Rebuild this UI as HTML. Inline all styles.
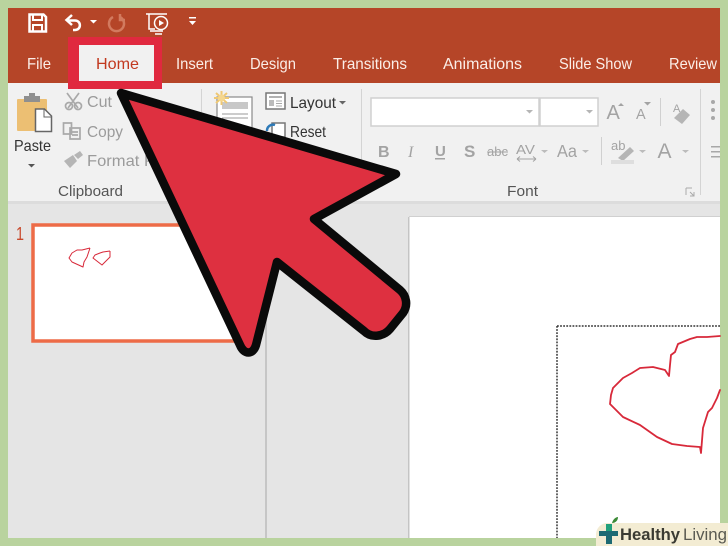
<!DOCTYPE html>
<html><head><meta charset="utf-8"><style>
html,body{margin:0;padding:0;width:728px;height:546px;overflow:hidden;background:#b9d39e}
svg{display:block}
text{font-family:"Liberation Sans",sans-serif}
</style></head><body>
<svg width="728" height="546" viewBox="0 0 728 546" xmlns="http://www.w3.org/2000/svg">
<rect width="728" height="546" fill="#b9d39e"/>
<!-- title bar -->
<rect x="8" y="8" width="712" height="75" fill="#b54528"/>
<!-- ribbon -->
<rect x="8" y="83" width="712" height="118" fill="#f1f1f1"/>
<rect x="8" y="201" width="712" height="337" fill="#e5e5e5"/>
<rect x="8" y="201" width="712" height="3" fill="#dcdcdc"/>
<!-- QAT -->
<g fill="none" stroke="#fff">
<path d="M29.500 14.500h14l2.500 2.500v14.500h-16.500z" stroke-width="2.500"/>
<path d="M33 15v5h9v-5M33 31v-6h9v6" stroke-width="2"/>
<path d="M72 15l-5.500 5 5.500 5M67 20.500h8c6.500 0 6.500 9.500 0 9.500h-2" stroke-width="2.500"/>
<path d="M113 17a7.500 7.500 0 1 0 7 0M120 14v6h5" stroke="#d27a5f" stroke-width="2.500"/>
<path d="M146 14h21M149 14v15h6M150 31h13M155 34h7" stroke-width="1.500"/>
<circle cx="161" cy="23" r="6.500" stroke-width="1.500"/>
</g>
<path d="M159 20v6l5-3zM90 20h7l-3.500 3.500zM189 21h7l-3.500 4zM189 17h7v1.500h-7z" fill="#fff"/>
<!-- Tabs -->
<rect x="68" y="37" width="94" height="52" fill="#e0293f"/>
<rect x="79" y="45" width="75" height="36" fill="#f1f1f1"/>
<g font-size="16" fill="#fbeee8">
<text x="27" y="69" textLength="24" lengthAdjust="spacingAndGlyphs">File</text>
<text x="176" y="69" textLength="37" lengthAdjust="spacingAndGlyphs">Insert</text>
<text x="250" y="69" textLength="46" lengthAdjust="spacingAndGlyphs">Design</text>
<text x="333" y="69" textLength="74" lengthAdjust="spacingAndGlyphs">Transitions</text>
<text x="443" y="69" textLength="79" lengthAdjust="spacingAndGlyphs">Animations</text>
<text x="559" y="69" textLength="73" lengthAdjust="spacingAndGlyphs">Slide Show</text>
<text x="669" y="69" textLength="48" lengthAdjust="spacingAndGlyphs">Review</text>
</g>
<text x="96" y="69" font-size="16" fill="#c2391f" textLength="43" lengthAdjust="spacingAndGlyphs">Home</text>
<!-- Clipboard -->
<rect x="17" y="99" width="30" height="32" rx="1" fill="#ecbf73"/>
<rect x="24" y="96" width="16" height="6" fill="#8f8f8f"/>
<rect x="29" y="93" width="6" height="5" fill="#8f8f8f"/>
<path d="M35.500 109h9l7 7v15.500h-16z" fill="#fff" stroke="#666" stroke-width="1.500"/>
<path d="M44 109v8h7.500" fill="none" stroke="#666"/>
<text x="14" y="151" font-size="16" fill="#333" textLength="37" lengthAdjust="spacingAndGlyphs">Paste</text>
<path d="M28 164h7l-3.500 3.500z" fill="#555"/>
<g fill="none" stroke="#a9a9a9" stroke-width="1.700">
<path d="M67 93l11 15M79 93l-11 15"/>
<circle cx="69" cy="106" r="3.500"/><circle cx="78" cy="106" r="3.500"/>
<path d="M63.500 123h8v11h-8zM70 128h10v11h-10zM72 132h6M72 135h6"/>
</g>
<path d="M64 161l9-6 4 6-7 7zM74 155l6-4 3 4-5 4z" fill="#b5b5b5"/>
<g font-size="16" fill="#9b9b9b">
<text x="87" y="107" textLength="25" lengthAdjust="spacingAndGlyphs">Cut</text>
<text x="87" y="137" textLength="36" lengthAdjust="spacingAndGlyphs">Copy</text>
<text x="87" y="166" textLength="68" lengthAdjust="spacingAndGlyphs">Format P</text>
</g>
<text x="58" y="196" font-size="14.500" fill="#555" textLength="65" lengthAdjust="spacingAndGlyphs">Clipboard</text>
<rect x="201" y="89" width="1" height="104" fill="#d4d4d4"/>
<!-- Slides -->
<rect x="217" y="97" width="35" height="34" fill="#fff" stroke="#8a8a8a" stroke-width="1.200"/>
<rect x="222" y="102" width="26" height="7" fill="#c8c8c8"/>
<path d="M222 114h26M222 118h26" stroke="#999"/>
<path d="M214 98h15M221.500 91v14M216 93l11 10M227 93l-11 10" stroke="#efc873" stroke-width="2"/>
<circle cx="221.500" cy="98" r="3.500" fill="#f5d78e"/>
<rect x="266" y="93" width="19" height="16" fill="#fff" stroke="#777" stroke-width="1.500"/>
<path d="M269 97h13" stroke="#999" stroke-width="1.500"/>
<path d="M269 100h5v6h-5z" fill="#bbb"/>
<path d="M276 101h6M276 103.500h6M276 106h6" stroke="#aaa"/>
<rect x="272" y="123" width="13" height="14" fill="#fff" stroke="#777" stroke-width="1.500"/>
<path d="M275 125a6 6 0 0 0-8 6" fill="none" stroke="#2d7ab8" stroke-width="2.500"/>
<text x="290" y="108" font-size="16" fill="#333" textLength="46" lengthAdjust="spacingAndGlyphs">Layout</text>
<path d="M339 101h7l-3.500 3.500z" fill="#666"/>
<text x="290" y="137" font-size="16" fill="#333" textLength="36" lengthAdjust="spacingAndGlyphs">Reset</text>
<rect x="361" y="89" width="1" height="104" fill="#d4d4d4"/>
<!-- Font combos -->
<rect x="371" y="98" width="168" height="28" fill="#fff" stroke="#d0d0d0" stroke-width="1.500"/>
<rect x="540" y="98" width="58" height="28" fill="#fff" stroke="#d0d0d0" stroke-width="1.500"/>
<path d="M526 110h7l-3.500 3.500zM586 110h7l-3.500 3.500z" fill="#b5b5b5"/>
<g fill="#a3a3a3">
<text x="606.500" y="119" font-size="20">A</text>
<text x="636" y="119" font-size="14.500">A</text>
<path d="M618 106h6l-3-3zM644 102h7l-3.500 3.500z"/>
<text x="378" y="157" font-size="16" font-weight="bold">B</text>
<text x="408" y="157" font-size="16" font-style="italic" style="font-family:'Liberation Serif',serif">I</text>
<text x="435" y="156" font-size="15" font-weight="bold">U</text>
<text x="464" y="157" font-size="17" font-weight="bold">S</text>
<text x="487" y="156" font-size="12.500" textLength="21" lengthAdjust="spacingAndGlyphs">abc</text>
<text x="516" y="154" font-size="13" textLength="19" lengthAdjust="spacingAndGlyphs">AV</text>
<text x="557" y="157" font-size="17.500" textLength="20" lengthAdjust="spacingAndGlyphs">Aa</text>
<text x="657.500" y="158" font-size="21">A</text>
<path d="M541 150h7l-3.500 3zM582 150h7l-3.500 3zM639 150h7l-3.500 3zM682 150h7l-3.500 3z" fill="#bcbcbc"/>
</g>
<rect x="435" y="158" width="10" height="1.500" fill="#a3a3a3"/>
<path d="M517 159h19M517 159l3-2.500M517 159l3 2.500M536 159l-3-2.500M536 159l-3 2.500M487 152h21" stroke="#a3a3a3" fill="none"/>
<rect x="660" y="98" width="1" height="28" fill="#d0d0d0"/>
<rect x="601" y="137" width="1" height="28" fill="#d0d0d0"/>
<text x="611" y="150" font-size="13" fill="#a3a3a3">ab</text>
<path d="M618 158l12-11 4 4-11 10z" fill="#b5b5b5"/>
<rect x="611" y="160" width="23" height="4" fill="#dedede"/>
<path d="M674 118l9-9 7 6-8 9z" fill="#b5b5b5"/>
<text x="673" y="112" font-size="11" fill="#a3a3a3">A</text>
<g fill="#a8a8a8"><circle cx="713" cy="102" r="2"/><circle cx="713" cy="110" r="2"/><circle cx="713" cy="118" r="2"/><rect x="711" y="146" width="9" height="1.500"/><rect x="711" y="151" width="9" height="1.500"/><rect x="711" y="156" width="9" height="1.500"/></g>
<text x="507" y="196" font-size="14.500" fill="#555" textLength="31" lengthAdjust="spacingAndGlyphs">Font</text>
<path d="M686 188h6M686 188v7M690 192l4 4M694 192v4h-4" fill="none" stroke="#aaa"/>
<rect x="700" y="89" width="1" height="106" fill="#d4d4d4"/>
<!-- panes -->
<rect x="265" y="204" width="2" height="334" fill="#c6c6c6"/>
<rect x="409" y="217" width="311" height="321" fill="#fff"/>
<rect x="408" y="217" width="1.500" height="321" fill="#c4c4c4"/>
<rect x="409" y="216" width="311" height="1" fill="#d0d0d0"/>
<text x="16" y="240" font-size="18" fill="#c8492c" textLength="8" lengthAdjust="spacingAndGlyphs">1</text>
<rect x="33" y="225" width="225" height="116" fill="#fff" stroke="#ed6b47" stroke-width="3.500"/>
<!-- small hearts -->
<g fill="none" stroke="#d8293a" stroke-width="1" stroke-linejoin="round">
<path d="M90 248 82 250 77 250 72 253 69 258 72 262 83 267 84 262 87 257 90 248"/>
<path d="M110 251 103 252 100 253 95 255 93 258 102 265 106 261 110 257 110 251"/>
</g>
<!-- selection box -->
<path d="M557 326H720M557 326V538" fill="none" stroke="#333" stroke-width="1.500" stroke-dasharray="1.800 1.300"/>
<!-- big heart -->
<path d="M720 336 707 337 697 337 690 339 678 344 675 352 671 355 670 365 669 376 665 370 653 367 640 368 632 373 623 378 613 388 611 395 610 404 623 417 640 425 657 437 672 444 687 446 700 447 701 453 703 428 708 412 712 408 717 398 720 390" fill="none" stroke="#d8293a" stroke-width="1.800" stroke-linejoin="round" stroke-linecap="round"/>
<!-- arrow -->
<path d="M121 93 396 174 314 219 400 290C407 296 408 306 403 313L390 329C384 336 372 339 364 331L277 262 256 345C253 355 244 355 240 345Z" fill="#de3040" stroke="#0a0a0a" stroke-width="8.500" stroke-linejoin="round"/>
<!-- watermark -->
<path d="M596 546V535c0-7 5-12 12-12H728V546z" fill="#f3ecd3"/>
<rect x="599" y="531" width="19" height="5" fill="#1d6a73"/>
<rect x="606" y="524" width="6" height="20" fill="#1d6a73"/>
<path d="M606 524h6v7h-6z" fill="#20a07c"/>
<path d="M612 523c1-4 4-6 6-6 0 3-2 6-6 6z" fill="#3c8a36"/>
<text x="620" y="540" font-size="17" font-weight="bold" fill="#3b3b33" textLength="60" lengthAdjust="spacingAndGlyphs">Healthy</text>
<text x="683" y="540" font-size="17" fill="#5a5a52" textLength="44" lengthAdjust="spacingAndGlyphs">Living</text>
</svg>
</body></html>
